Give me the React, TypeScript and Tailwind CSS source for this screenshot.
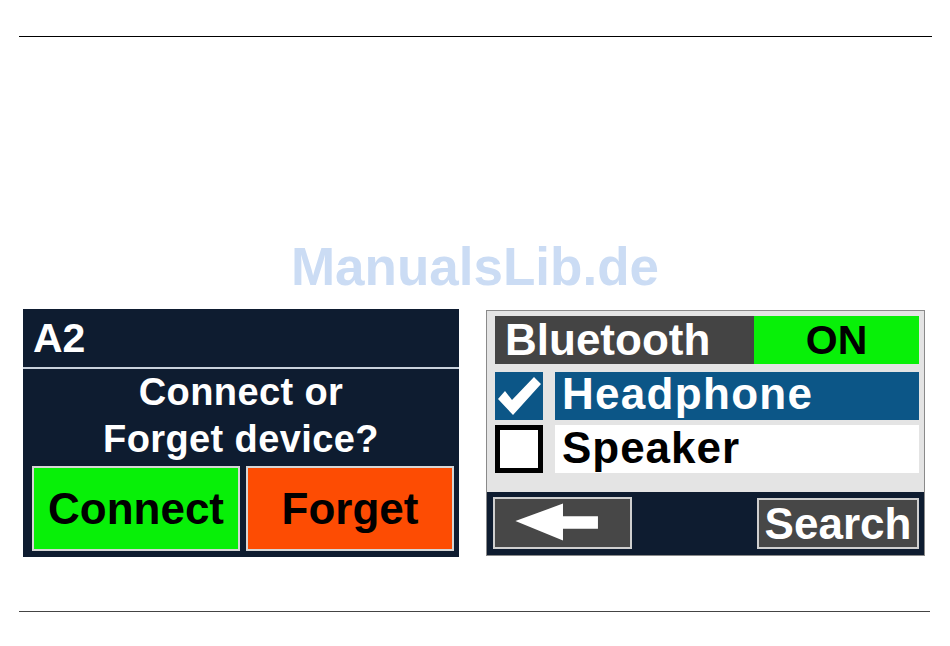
import React from 'react';

const font = { fontFamily: '"Liberation Sans", Arial, sans-serif' };

const CheckMark: React.FC = () => (
    <svg width="48" height="48" viewBox="0 0 48 48">
        <path d="M3 27 L10 19 L17 28 L39 5 L46 12 L18 43 Z" fill="#ffffff" />
    </svg>
);

const BackArrow: React.FC = () => (
    <svg width="139" height="52" viewBox="0 0 139 52">
        <path d="M21 24 L70 6 L70 19 L106 19 L106 32 L70 32 L70 44 Z" fill="#ffffff" />
    </svg>
);

const ConfirmScreen: React.FC = () => (
    <div className="w-[436px] h-[248px] bg-[#0e1c30] flex flex-col">
        <div className="h-[58px] flex items-center pl-[10px]">
            <span className="text-white font-bold text-[41px] leading-none">A2</span>
        </div>
        <div className="h-[2px] bg-[#c9d1dc]" />
        <div className="text-white font-bold text-[38px] leading-[47px] text-center tracking-[0.4px]">
            <div>Connect or</div>
            <div>Forget device?</div>
        </div>
        <div className="mt-[3px] flex pl-[9px] gap-[6px]">
            <div className="w-[208px] h-[85px] bg-[#08f008] border-2 border-[#d6d6d6] flex items-center justify-center">
                <span className="text-black font-bold text-[44px] leading-none">Connect</span>
            </div>
            <div className="w-[208px] h-[85px] bg-[#fd4c03] border-2 border-[#d6d6d6] flex items-center justify-center">
                <span className="text-black font-bold text-[44px] leading-none">Forget</span>
            </div>
        </div>
    </div>
);

const BluetoothScreen: React.FC = () => (
    <div className="mt-[1px] w-[439px] h-[246px] border border-[#8a8a8a] flex flex-col">
        <div className="flex-1 bg-[#e4e4e4] pt-[5px] pl-[8px] pr-[5px] flex flex-col">
            <div className="flex h-[48px] w-[424px]">
                <div className="w-[259px] bg-[#444444] flex items-center pl-[10px]">
                    <span className="text-white font-bold text-[44px] leading-none">Bluetooth</span>
                </div>
                <div className="flex-1 bg-[#08f008] flex items-center justify-center">
                    <span className="text-black font-bold text-[41px] leading-none">ON</span>
                </div>
            </div>
            <div className="mt-[8px] flex h-[48px] gap-[12px]">
                <div className="w-[48px] h-[48px] bg-[#0c5687]">
                    <CheckMark />
                </div>
                <div className="w-[364px] bg-[#0c5687] flex items-center pl-[7px] pb-[5px]">
                    <span className="text-white font-bold text-[44px] leading-none tracking-[1.3px]">Headphone</span>
                </div>
            </div>
            <div className="mt-[5px] flex h-[48px] gap-[12px]">
                <div className="w-[48px] h-[48px] bg-white border-[5px] border-black" />
                <div className="w-[365px] bg-white flex items-center pl-[7px] pb-[2px]">
                    <span className="text-black font-bold text-[44px] leading-none tracking-[1px]">Speaker</span>
                </div>
            </div>
        </div>
        <div className="h-[63px] bg-[#0e1c30] flex items-start justify-between pl-[6px] pr-[5px] pt-[5px]">
            <div className="w-[139px] h-[52px] bg-[#474747] border-2 border-[#cfcfcf] flex items-center justify-center">
                <BackArrow />
            </div>
            <div className="mt-[1px] w-[162px] h-[51px] bg-[#474747] border-2 border-[#cfcfcf] flex items-center justify-center">
                <span className="text-white font-bold text-[44px] leading-none">Search</span>
            </div>
        </div>
    </div>
);

const App: React.FC = () => {
    return (
        <div className="w-[950px] h-[646px] bg-white flex flex-col" style={font}>
            <div className="mt-[36px] mx-[19px] w-[913px] h-px bg-black" />
            <div className="mt-[203px] text-center font-bold text-[53px] leading-none text-[#cbdcf4]">
                ManualsLib.de
            </div>
            <div className="mt-[16px] ml-[23px] flex items-start gap-[27px]">
                <ConfirmScreen />
                <BluetoothScreen />
            </div>
            <div className="mt-[54px] mx-[19px] w-[911px] h-px bg-[#444444]" />
        </div>
    );
};

export default App;
